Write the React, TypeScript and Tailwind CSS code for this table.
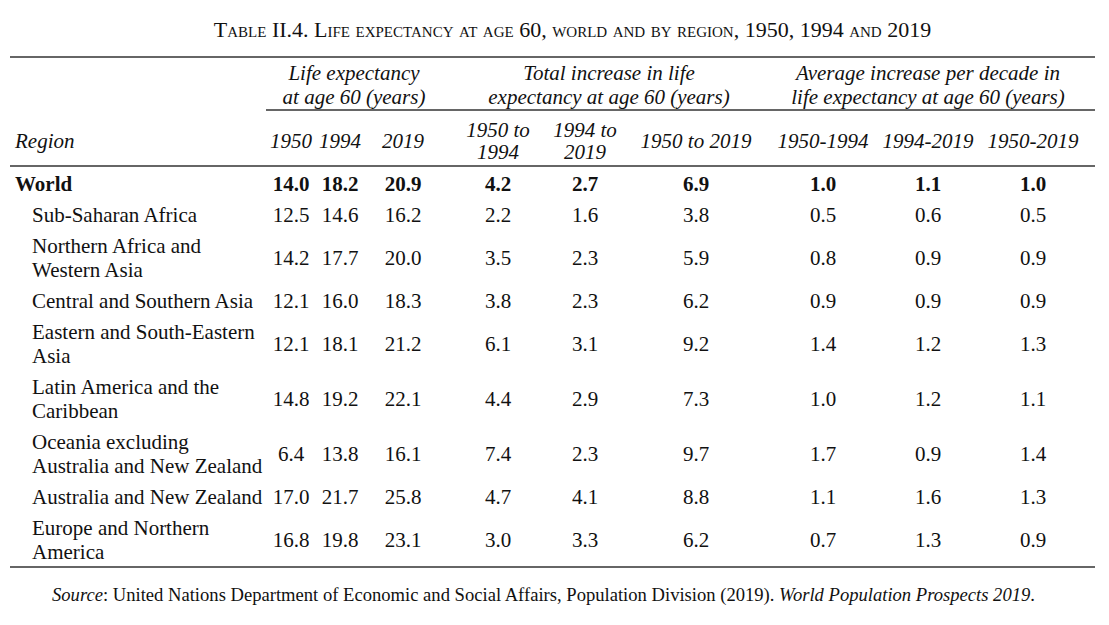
import React from "react";

type Row = {
  region: string[];
  values: string[];
  bold?: boolean;
};

const rows: Row[] = [
  { region: ["World"], values: ["14.0", "18.2", "20.9", "4.2", "2.7", "6.9", "1.0", "1.1", "1.0"], bold: true },
  { region: ["Sub-Saharan Africa"], values: ["12.5", "14.6", "16.2", "2.2", "1.6", "3.8", "0.5", "0.6", "0.5"] },
  { region: ["Northern Africa and", "Western Asia"], values: ["14.2", "17.7", "20.0", "3.5", "2.3", "5.9", "0.8", "0.9", "0.9"] },
  { region: ["Central and Southern Asia"], values: ["12.1", "16.0", "18.3", "3.8", "2.3", "6.2", "0.9", "0.9", "0.9"] },
  { region: ["Eastern and South-Eastern", "Asia"], values: ["12.1", "18.1", "21.2", "6.1", "3.1", "9.2", "1.4", "1.2", "1.3"] },
  { region: ["Latin America and the", "Caribbean"], values: ["14.8", "19.2", "22.1", "4.4", "2.9", "7.3", "1.0", "1.2", "1.1"] },
  { region: ["Oceania excluding", "Australia and New Zealand"], values: ["6.4", "13.8", "16.1", "7.4", "2.3", "9.7", "1.7", "0.9", "1.4"] },
  { region: ["Australia and New Zealand"], values: ["17.0", "21.7", "25.8", "4.7", "4.1", "8.8", "1.1", "1.6", "1.3"] },
  { region: ["Europe and Northern", "America"], values: ["16.8", "19.8", "23.1", "3.0", "3.3", "6.2", "0.7", "1.3", "0.9"] },
];

const yearHeads: string[][] = [
  ["1950"],
  ["1994"],
  ["2019"],
  ["1950 to", "1994"],
  ["1994 to", "2019"],
  ["1950 to 2019"],
  ["1950-1994"],
  ["1994-2019"],
  ["1950-2019"],
];

const grid =
  "grid grid-cols-[256px_50px_48px_78px_112px_62px_160px_94px_116px_94px_15px]";

export default function App() {
  return (
    <div
      className="min-h-screen bg-white text-[#111]"
      style={{ fontFamily: '"Liberation Serif", "Times New Roman", serif' }}
    >
      <div className="flex justify-center pl-[36px] pt-[18px] text-[22px] leading-[24px] [font-variant:small-caps] whitespace-nowrap">
        Table II.4. Life expectancy at age 60, world and by region, 1950, 1994 and 2019
      </div>

      <div className="ml-[10px] mt-[14px] w-[1085px] text-[21px]">
        <div className="border-t-2 border-[#666]" />

        {/* group headings */}
        <div className={`${grid} italic leading-[24px]`}>
          <div />
          <div className="col-span-3 border-b-2 border-[#666] pt-[3px] text-center whitespace-nowrap">
            Life expectancy
            <br />
            at age 60 (years)
          </div>
          <div className="col-span-3 border-b-2 border-[#666] pt-[3px] text-center whitespace-nowrap">
            Total increase in life
            <br />
            expectancy at age 60 (years)
          </div>
          <div className="col-span-3 border-b-2 border-[#666] pt-[3px] text-center whitespace-nowrap">
            Average increase per decade in
            <br />
            life expectancy at age 60 (years)
          </div>
          <div className="border-b-2 border-[#666]" />
        </div>

        {/* column headings */}
        <div className={`${grid} h-[56px] border-b-2 border-[#666] italic leading-[22px]`}>
          <div className="flex items-center pl-[5px] pt-[6px]">Region</div>
          {yearHeads.map((lines, i) => (
            <div key={i} className="flex flex-col items-center justify-center whitespace-nowrap pt-[6px]">
              {lines.map((l) => (
                <span key={l}>{l}</span>
              ))}
            </div>
          ))}
          <div />
        </div>

        {/* data */}
        <div className="border-b-2 border-[#666]">
          {rows.map((row) => (
            <div
              key={row.region.join(" ")}
              className={`${grid} pt-[5px] pb-[2px] leading-[24px] ${row.bold ? "font-bold" : ""}`}
            >
              <div className={`whitespace-nowrap ${row.bold ? "pl-[5px]" : "pl-[22px]"}`}>
                {row.region.map((l) => (
                  <div key={l}>{l}</div>
                ))}
              </div>
              {row.values.map((v, i) => (
                <div key={i} className="flex items-center justify-center">
                  {v}
                </div>
              ))}
              <div />
            </div>
          ))}
        </div>
      </div>

      <p className="ml-[52px] mt-[15px] text-[18.6px] leading-[24px] whitespace-nowrap">
        <i>Source</i>: United Nations Department of Economic and Social Affairs, Population Division (2019).{" "}
        <i>World Population Prospects 2019</i>.
      </p>
    </div>
  );
}
